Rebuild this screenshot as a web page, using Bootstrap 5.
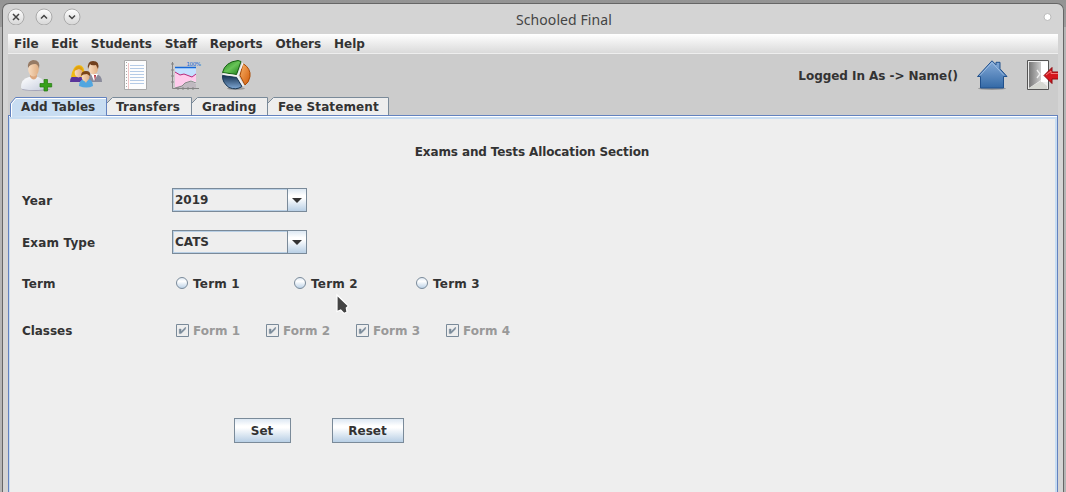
<!DOCTYPE html>
<html lang="en">
<head>
<meta charset="utf-8">
<title>Schooled Final</title>
<link href="https://cdn.jsdelivr.net/npm/bootstrap@5.3.0/dist/css/bootstrap.min.css" rel="stylesheet">
<style>
body{background:linear-gradient(#949494,#9c9c9c 27px,#b5b5b5 27px,#b5b5b5);font:bold 12px/14px "DejaVu Sans",sans-serif;color:#333;height:492px}
.desk{height:492px;padding:3px 2px 0 2px}
.win{height:489px;border:1px solid #666;border-bottom:0;border-radius:7px 7px 0 0;background:#d4d4d4;padding:0 5px}
.titlebar{height:30px;padding-top:3px;font:15px/26px "Noto Sans",sans-serif;color:#444}
.ctl{display:block;width:18px;height:18px;margin-right:10px}
.title-text{margin-left:425px;font-size:14px;letter-spacing:.08px}
.pin{width:9px;height:9px;margin:6px 6px 0 0}
.menus{height:20px;background:linear-gradient(#fff,#dadada);border-bottom:1px solid #eee;padding:3px 6px 0;gap:12.8px}
.tools{height:43px;background:#ccc}
.tools svg{display:block}
.logged{margin:15px 19px 0 0;letter-spacing:-.05px}
.tabs-row{height:18px;background:#ccc;padding-left:2px}
.tab svg{position:absolute;left:0;top:0}
.tab{position:relative;height:18px;padding-top:3px}
.tab span{position:relative;letter-spacing:.1px}
.pane{height:377px;background:#eee;border:1px solid #6382bf;border-bottom:0;box-shadow:inset 0 1px #fff,inset 1px 0 #c8ddf2,inset 0 3px #c8ddf2,inset -2px 0 #c8ddf2;padding:29px 13px 0}
.heading{padding-right:2px;letter-spacing:-.12px}
.lab{width:150px;padding-top:2px;letter-spacing:.15px}
.lab-wide{width:154px}
.combo{width:135px;height:24px;border:1px solid #7a8a99;box-shadow:inset 0 0 0 1px #b8cfe5;line-height:22px;padding-left:2px}
.arrow{width:19px;height:22px;border-left:1px solid #7a8a99;background:linear-gradient(#dde8f3,#fff 30%,#fff 40%,#b8cfe5)}
.opt{gap:5px;letter-spacing:.2px}
.opt span{padding-top:2px}
.chk{gap:4px;width:90px;letter-spacing:.05px}
.opt svg{display:block}
.off{color:#999}
.jbtn{height:25px;border:1px solid #7a8a99;border-radius:0;background:linear-gradient(#dde8f3,#fff 30%,#fff 38%,#b8cfe5);font:bold 12px/14px "DejaVu Sans",sans-serif;color:#333;padding:0 1px 0 0}
.cursor{position:absolute;left:334px;top:292px}
</style>
</head>
<body class="overflow-hidden">
<svg width="0" height="0" class="position-absolute">
<defs>
<linearGradient id="ctlg" x2="0" y2="1"><stop stop-color="#fff"/><stop offset="1" stop-color="#d6d6d6"/></linearGradient>
<linearGradient id="rad" x2="0" y2="1"><stop stop-color="#dde8f3"/><stop offset=".35" stop-color="#fff"/><stop offset="1" stop-color="#b8cfe5"/></linearGradient>
<linearGradient id="skin" x2="1" y2="0"><stop stop-color="#f8dcc0"/><stop offset="1" stop-color="#e0ae82"/></linearGradient>
<linearGradient id="shirt" x2="1" y2="1"><stop stop-color="#fff"/><stop offset="1" stop-color="#c8cede"/></linearGradient>
<linearGradient id="house" x2="0" y2="1"><stop stop-color="#86abd8"/><stop offset="1" stop-color="#3369a6"/></linearGradient>
<linearGradient id="door" x2="1" y2="0"><stop stop-color="#777"/><stop offset="1" stop-color="#ccc"/></linearGradient>
<linearGradient id="grn" x2="1" y2="1"><stop stop-color="#1d7d18"/><stop offset=".5" stop-color="#68c457"/><stop offset="1" stop-color="#1b7a18"/></linearGradient>
<linearGradient id="org" x2="1" y2="1"><stop stop-color="#f9b369"/><stop offset="1" stop-color="#d05a08"/></linearGradient>
<linearGradient id="blu" x2="0" y2="1"><stop stop-color="#15304f"/><stop offset="1" stop-color="#7fa8d4"/></linearGradient>
<g id="tick"><path d="M.5.5h12v12H.5z" fill="none" stroke="#7a8a99"/><path d="M3.200 5h1.900v2.600L9.600 3v2L5.100 9.600H3.200z" fill="#7a8a99" stroke="#7a8a99" stroke-width=".4"/></g>
<circle id="radio" cx="6" cy="6" r="5.500" fill="url(#rad)" stroke="#7a8a99"/>
</defs>
</svg>
<div class="desk">
<div class="win">
<header class="titlebar d-flex">
<svg class="ctl" style="margin-left:-1px" viewBox="0 0 18 18"><circle cx="9" cy="10" r="8" fill="url(#ctlg)" stroke="#aaa"/><path d="M6 7l6 6m0-6l-6 6" stroke="#444" stroke-width="1.500"/></svg>
<svg class="ctl" viewBox="0 0 18 18"><circle cx="9" cy="10" r="8" fill="url(#ctlg)" stroke="#aaa"/><path d="M6 11.500l3-3 3 3" fill="none" stroke="#444" stroke-width="1.500"/></svg>
<svg class="ctl" viewBox="0 0 18 18"><circle cx="9" cy="10" r="8" fill="url(#ctlg)" stroke="#aaa"/><path d="M6 8.500l3 3 3-3" fill="none" stroke="#444" stroke-width="1.500"/></svg>
<span class="title-text">Schooled Final</span>
<svg class="pin ms-auto" viewBox="0 0 9 9"><circle cx="4.500" cy="4" r="3.500" fill="#fff" stroke="#bbb"/></svg>
</header>
<nav class="menus d-flex"><span>File</span><span>Edit</span><span>Students</span><span>Staff</span><span>Reports</span><span>Others</span><span>Help</span></nav>
<div class="tools d-flex">
<svg width="260" height="43" viewBox="8 54 260 43">
<!-- add user -->
<ellipse cx="36" cy="89.500" rx="14" ry="1.500" fill="#a5a5b8"/>
<path d="M21 88q-.5-9 8-11h9q7 2 8 11-1 2-12 2T21 88z" fill="url(#shirt)"/>
<path d="M30 74h7v3q-3 5-7 0z" fill="#dca77e"/><ellipse cx="33.500" cy="69" rx="5.300" ry="7.500" fill="url(#skin)"/>
<path d="M28 68q-1-7 5-8 8 0 6 9-1-5-4-5-5 0-7 4z" fill="#967a64"/>
<path d="M44 79.500h3.500v4h4.200V87h-4.200v4H44v-4h-4v-3.500h4z" fill="#37a01c" stroke="#23780f" stroke-width=".7"/>
<!-- people -->
<path d="M87 82q0-8 6-8h3q6 1 6 8z" fill="#8a8b9b"/><path d="M91 74l3 7 4-7z" fill="#fff"/><path d="M94 75l1 6 1-6z" fill="#b32b38"/>
<ellipse cx="93.500" cy="68.500" rx="4.500" ry="6" fill="url(#skin)"/><path d="M88 69q-1-8 5-8 7 0 5 8l-2-4q-5 1-6-1z" fill="#71401d"/>
<path d="M70 82q0-7 7-7l8 2v5z" fill="#59349b"/><path d="M71 77q2-12 8-12 6 0 6 12z" fill="#f0bb15"/><ellipse cx="78.500" cy="72.500" rx="3.800" ry="5" fill="url(#skin)"/><path d="M74 71q1-5 5-5 4 1 4 5l-4-2z" fill="#e0a010"/>
<path d="M79 86q0-6 5-7h4q5 1 5 7-6 3-14 0z" fill="#51a6e0"/><path d="M83 79h5l-2 4z" fill="#e6bb94"/><ellipse cx="85.500" cy="76.500" rx="3.900" ry="4.900" fill="url(#skin)"/><path d="M81 76q0-5 5-5t4 5l-3-2q-4 0-6 2z" fill="#7a4519"/>
<!-- sheet -->
<path d="M124.500 60.500h22v29h-22z" fill="#fdfdfd" stroke="#aaa"/><path d="M130 65.500h14m-14 3h14m-14 3h14m-14 3h14m-14 3h14m-14 3h14m-14 3h14" stroke="#b5cbe6"/><path d="M128.500 63v26" stroke="#f0c5c5"/><path d="M126.500 62v27" stroke="#aaa" stroke-dasharray="1 2"/>
<!-- chart -->
<path d="M175 67h21v21h-21z" fill="#f4f4fa"/><path d="M175 68h21v6l-4 3-8-3-4 1-5-3z" fill="#c4e0ff"/><path d="M175 72l5 3 4-1 8 3 4-3v8l-5-2-7 5-9 3z" fill="#ffcbec"/><path d="M175 88l7-2 3-3 6-2 5 3v4z" fill="#c0b9c0"/>
<path d="M175 67.500h21" stroke="#1769d8" stroke-width="1.500"/><path d="M175 72l5 3 4-1 8 3 4-3" fill="none" stroke="#b72879"/><path d="M175 88l7-2 3-3 6-2 5 2" fill="none" stroke="#888"/>
<path d="M172.500 62v26.500H199M171 64h3m-3 6h3m-3 6h3m-3 6h3m4 5v3m5-3v3m5-3v3m5-3v3" fill="none" stroke="#858585"/><text x="186.500" y="66" font-family="DejaVu Sans" font-weight="normal" font-size="5.500" textLength="14.500" fill="#1769d8">100%</text>
<!-- pie -->
<ellipse cx="236" cy="88.500" rx="9" ry="1.500" fill="#999"/>
<path d="M222.500 72.500Q225 62 238 60.500l3 1-4.500 13z" fill="url(#grn)" stroke="#146010"/>
<path d="M243 63.500q8 5 7 13-1 6-5 8.500l-5-9.500z" fill="url(#org)" stroke="#a84a05"/>
<path d="M222.500 75.500l14 2 5.500 9q-6 4-13 1-7-5-6.500-12z" fill="url(#blu)" stroke="#183653"/>
<path d="M223 74l14.500 2 5.500-13m-5.500 13l6 10" fill="none" stroke="#f4f4f4" stroke-width="1.500"/>
</svg>
<span class="logged ms-auto">Logged In As -&gt; Name()</span>
<svg width="81" height="43" viewBox="977 54 81 43">
<ellipse cx="992" cy="88.500" rx="14" ry="1.500" fill="#999"/>
<path d="M977.500 76.500L992 60.800l4 4v-2.500h4v6.500l7 7.700h-3.500v11.500h-23V76.500z" fill="url(#house)" stroke="#20508c"/><path d="M980 75.500l12-13 12 13" fill="none" stroke="#a8c5e8" stroke-width=".8"/>
<path d="M1027.500 60.500h21v29h-21z" fill="#eee" stroke="#555"/><path d="M1029 62h12v18l-12 8z" fill="url(#door)"/><path d="M1029 88l12-7 6 5v3h-18z" fill="#d6d8d2"/><path d="M1041 61.500h7V82h-7z" fill="#fff"/><path d="M1037 70l3 4-3 4" fill="none" stroke="#eee" stroke-width="1.300"/>
<path d="M1044 75.500l8-8v4.500h8v7h-8v4.500z" fill="#d5161d" stroke="#8d0b10"/><path d="M1046 75l5-4v2.500h7" fill="none" stroke="#f37b7b"/>
</svg>
</div>
<div class="tabs-row d-flex">
<div class="tab" style="width:97px;padding-left:11px"><svg width="98" height="20"><path d="M.5 20V6.500l5-6H96.500v18" fill="#c8ddf2" stroke="#6382bf"/><path d="M1.500 20V7l4.500-5.500H96" fill="none" stroke="#fff"/></svg><span>Add Tables</span></div>
<div class="tab" style="width:85px;padding-left:9px"><svg width="85" height="18"><path d="M0 6L5.500.500H84.500V18H0z" fill="#eee"/><path d="M0 6L5.500.500H84.500V18" fill="none" stroke="#7a8a99"/></svg><span>Transfers</span></div>
<div class="tab" style="width:76px;padding-left:10px"><svg width="76" height="18"><path d="M0 6L5.500.500H75.500V18H0z" fill="#eee"/><path d="M0 6L5.500.500H75.500V18" fill="none" stroke="#7a8a99"/></svg><span>Grading</span></div>
<div class="tab" style="width:121px;padding-left:10px"><svg width="121" height="18"><path d="M0 6L5.500.500H120.500V18H0z" fill="#eee"/><path d="M0 6L5.500.500H120.500V18" fill="none" stroke="#7a8a99"/></svg><span>Fee Statement</span></div>
</div>
<main class="pane">
<div class="heading text-center">Exams and Tests Allocation Section</div>
<div class="d-flex align-items-center" style="margin-top:29px"><span class="lab">Year</span><div class="combo d-flex justify-content-between"><span>2019</span><span class="arrow"><svg class="d-block" width="18" height="22"><path d="M4 9h10l-5 5z" fill="#333"/></svg></span></div></div>
<div class="d-flex align-items-center" style="margin-top:18px"><span class="lab">Exam Type</span><div class="combo d-flex justify-content-between"><span>CATS</span><span class="arrow"><svg class="d-block" width="18" height="22"><path d="M4 9h10l-5 5z" fill="#333"/></svg></span></div></div>
<div class="d-flex align-items-center" style="margin-top:21px"><span class="lab lab-wide">Term</span>
<div class="opt d-flex align-items-center" style="width:118px"><svg width="12" height="12"><use href="#radio"/></svg><span>Term 1</span></div>
<div class="opt d-flex align-items-center" style="width:122px"><svg width="12" height="12"><use href="#radio"/></svg><span>Term 2</span></div>
<div class="opt d-flex align-items-center"><svg width="12" height="12"><use href="#radio"/></svg><span>Term 3</span></div></div>
<div class="d-flex align-items-center" style="margin-top:31px"><span class="lab lab-wide" style="letter-spacing:-.05px">Classes</span>
<div class="opt chk off d-flex align-items-center"><svg width="13" height="13"><use href="#tick"/></svg><span>Form 1</span></div>
<div class="opt chk off d-flex align-items-center"><svg width="13" height="13"><use href="#tick"/></svg><span>Form 2</span></div>
<div class="opt chk off d-flex align-items-center"><svg width="13" height="13"><use href="#tick"/></svg><span>Form 3</span></div>
<div class="opt chk off d-flex align-items-center"><svg width="13" height="13"><use href="#tick"/></svg><span>Form 4</span></div></div>
<div class="d-flex" style="margin:80px 0 0 212px;gap:41px"><button class="jbtn" style="width:57px">Set</button><button class="jbtn" style="width:72px">Reset</button></div>
</main>
</div>
</div>
<svg class="cursor" width="18" height="26"><path d="M3 3v16.500l3.700-1.500 3.300 3.500 3-1.500-.7-4 2.200-2z" fill="#444" stroke="#fff" stroke-width="1.200"/></svg>
<script src="https://cdn.jsdelivr.net/npm/bootstrap@5.3.0/dist/js/bootstrap.bundle.min.js"></script>
</body>
</html>
